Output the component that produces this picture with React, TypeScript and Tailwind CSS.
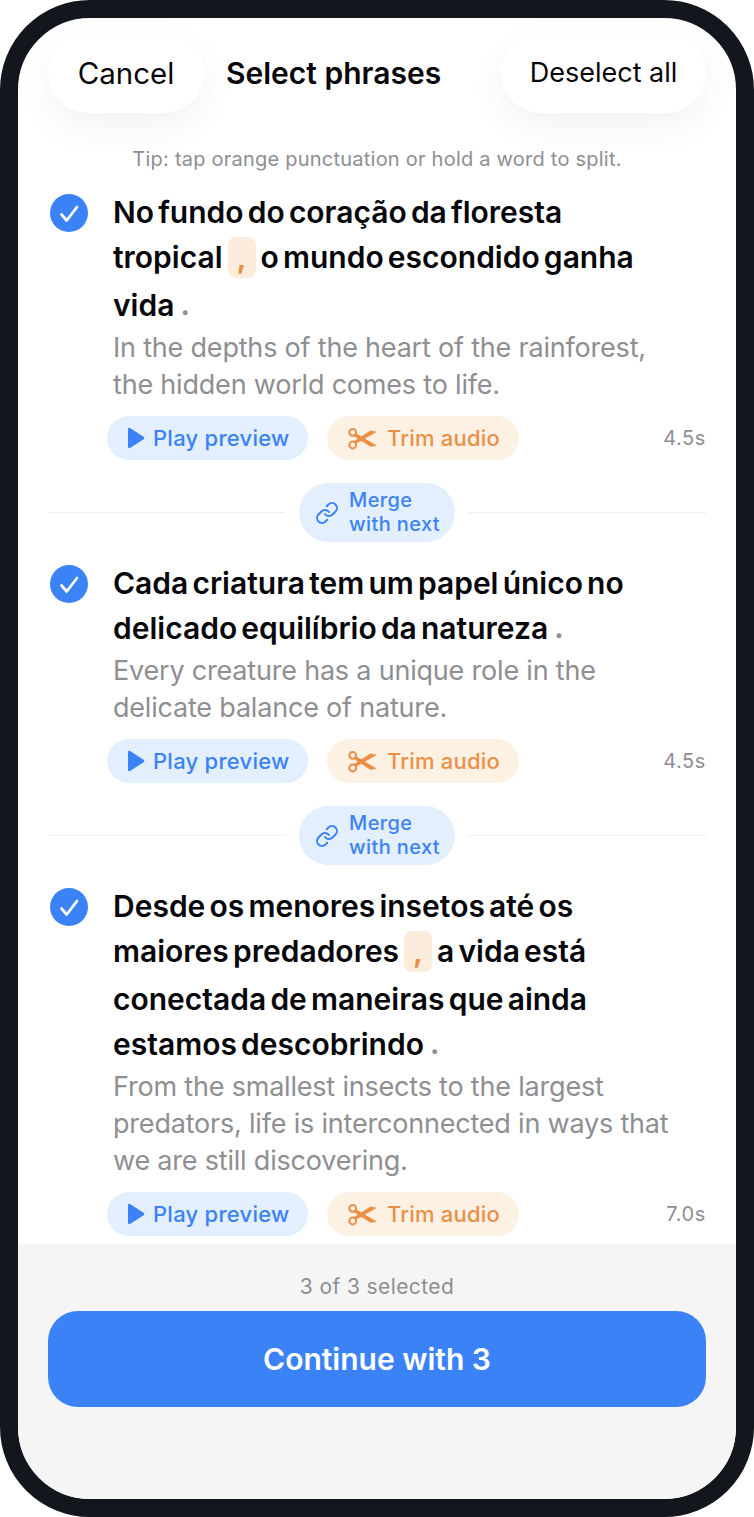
import { Link } from "lucide-react";

type Token = { t: string } | { comma: true } | { period: true };

interface Phrase {
	lines: Token[][];
	translation: string[];
	duration: string;
}

const phrases: Phrase[] = [
	{
		lines: [
			[{ t: "No fundo do coração da floresta" }],
			[{ t: "tropical" }, { comma: true }, { t: "o mundo escondido ganha" }],
			[{ t: "vida" }, { period: true }],
		],
		translation: [
			"In the depths of the heart of the rainforest,",
			"the hidden world comes to life.",
		],
		duration: "4.5s",
	},
	{
		lines: [
			[{ t: "Cada criatura tem um papel único no" }],
			[{ t: "delicado equilíbrio da natureza" }, { period: true }],
		],
		translation: [
			"Every creature has a unique role in the",
			"delicate balance of nature.",
		],
		duration: "4.5s",
	},
	{
		lines: [
			[{ t: "Desde os menores insetos até os" }],
			[{ t: "maiores predadores" }, { comma: true }, { t: "a vida está" }],
			[{ t: "conectada de maneiras que ainda" }],
			[{ t: "estamos descobrindo" }, { period: true }],
		],
		translation: [
			"From the smallest insects to the largest",
			"predators, life is interconnected in ways that",
			"we are still discovering.",
		],
		duration: "7.0s",
	},
];

function ScissorsIcon() {
	return (
		<svg width="28" height="23" viewBox="0 0 28 23" aria-hidden="true">
			<circle cx="4.7" cy="5.3" r="3.4" fill="none" stroke="#ea8f45" strokeWidth="2" />
			<circle cx="4.7" cy="18" r="3.4" fill="none" stroke="#ea8f45" strokeWidth="2" />
			<path
				d="M7.8 6.6 28 18.4l-5.4 1.2L7 9.4z"
				fill="#ea8f45"
				stroke="#ea8f45"
				strokeWidth="0.6"
				strokeLinejoin="round"
			/>
			<path
				d="M7.8 16.6 28 5l-5.4-1.2L7 13.8z"
				fill="#ea8f45"
				stroke="#ea8f45"
				strokeWidth="0.6"
				strokeLinejoin="round"
			/>
		</svg>
	);
}

function PhraseLine({ tokens }: { tokens: Token[] }) {
	const hasChip = tokens.some((tok) => "comma" in tok);
	return (
		<div className={`flex items-center whitespace-nowrap ${hasChip ? "pb-[3px]" : ""}`}>
			{tokens.map((tok, i) => {
				if ("comma" in tok) {
					return (
						<span
							key={i}
							className="mx-[5px] flex h-[41px] w-[28px] items-end justify-center rounded-lg bg-[#fbecdc] pb-[6px] font-bold text-[#ea8f45] text-[29px] leading-[28px]"
						>
							,
						</span>
					);
				}
				if ("period" in tok) {
					return (
						<span key={i} className="ml-[6px] font-bold text-[#8e8e93] text-[28px]">
							.
						</span>
					);
				}
				return <span key={i}>{tok.t}</span>;
			})}
		</div>
	);
}

function PhraseRow({ phrase }: { phrase: Phrase }) {
	return (
		<div className="flex">
			<div className="flex h-[38px] w-[38px] shrink-0 items-center justify-center rounded-full bg-[#3b82f6]">
				<svg width="38" height="38" viewBox="0 0 38 38" aria-hidden="true">
					<path
						d="M11.5 20.5l5.2 6L27 13"
						fill="none"
						stroke="#fff"
						strokeWidth="2.7"
						strokeLinecap="round"
						strokeLinejoin="round"
					/>
				</svg>
			</div>
			<div className="ml-[25px] min-w-0 flex-1 -mt-[4px]">
				<div className="font-semibold text-[#08080c] text-[30px] leading-[45px] tracking-[0px] [word-spacing:-3.4px]">
					{phrase.lines.map((line, i) => (
						<PhraseLine key={i} tokens={line} />
					))}
				</div>
				<div className="mt-[1px] text-[#8e8e93] text-[27px] leading-[37px] tracking-[-0.2px]">
					{phrase.translation.map((line) => (
						<div key={line} className="whitespace-nowrap">
							{line}
						</div>
					))}
				</div>
			</div>
		</div>
	);
}

function ActionRow({ duration }: { duration: string }) {
	return (
		<div className="mt-[13px] ml-[57px] flex items-center">
			<button
				type="button"
				className="flex h-[44px] w-[201px] items-center rounded-[22px] bg-[#e3effd] pl-[20px] font-medium text-[#3b82f6] text-[22px]"
			>
				<svg width="18" height="22" viewBox="0 0 18 22" aria-hidden="true">
					<path
						d="M1 2.2C1 1.1 2.1.5 3 1l13.6 8.7c.9.6.9 2 0 2.6L3 21c-.9.5-2-.1-2-1.2z"
						fill="#3b82f6"
					/>
				</svg>
				<span className="ml-[8px] tracking-[0.25px]">Play preview</span>
			</button>
			<button
				type="button"
				className="ml-[19px] flex h-[44px] w-[192px] items-center rounded-[22px] bg-[#fdf1e4] pl-[21px] font-medium text-[#ea8f45] text-[22px]"
			>
				<ScissorsIcon />
				<span className="ml-[11px] tracking-[0.2px]">Trim audio</span>
			</button>
			<span className="ml-auto text-[#8e8e93] text-[20px] tracking-[0.6px]">
				{duration}
			</span>
		</div>
	);
}

function MergeDivider() {
	return (
		<div className="my-[23px] -ml-[2px] flex h-[59px] items-center">
			<div className="h-px flex-1 bg-[#eeeeef]" />
			<button
				type="button"
				className="mx-[14px] flex h-[59px] w-[156px] items-center rounded-[30px] bg-[#e3effd] pl-[16px] text-left font-medium text-[#3b82f6] text-[20px] leading-[24px]"
			>
				<Link className="h-[24px] w-[24px]" strokeWidth={2} />
				<span className="ml-[10px] pb-[1px] tracking-[0.4px]">
					Merge
					<br />
					with next
				</span>
			</button>
			<div className="h-px flex-1 bg-[#eeeeef]" />
		</div>
	);
}

export default function App() {
	return (
		<div
			className="h-[1517px] w-[754px] bg-white"
			style={{ fontFamily: "Inter, 'Liberation Sans', sans-serif" }}
		>
			<div className="h-full w-full overflow-hidden rounded-[90px] border-[18px] border-[#14161d] bg-white">
				<div className="flex h-full flex-col">
					<header className="flex h-[126px] shrink-0 items-start px-[30px] pt-[15px]">
						<button
							type="button"
							className="flex h-[80px] w-[156px] items-center justify-center rounded-[40px] bg-white text-[#08080c] text-[29.5px] shadow-[0_14px_36px_rgba(0,0,0,0.05)]"
						>
							Cancel
						</button>
						<h1 className="ml-[22px] flex h-[80px] items-center font-semibold text-[#08080c] text-[30px]">
							Select phrases
						</h1>
						<button
							type="button"
							className="ml-auto flex h-[80px] w-[205px] items-center justify-center rounded-[40px] bg-white pt-[1px] text-[#08080c] text-[27px] shadow-[0_14px_36px_rgba(0,0,0,0.05)]"
						>
							Deselect all
						</button>
					</header>
					<div className="min-h-0 flex-1 overflow-hidden px-[30px]">
						<p className="pt-[1px] text-center text-[#8e8e93] text-[20px] leading-[28px] tracking-[0.23px]">
							Tip: tap orange punctuation or hold a word to split.
						</p>
						<div className="mt-[21px] ml-[2px]">
							{phrases.map((phrase, i) => (
								<div key={phrase.duration + i}>
									<PhraseRow phrase={phrase} />
									<ActionRow duration={phrase.duration} />
									{i < phrases.length - 1 && <MergeDivider />}
								</div>
							))}
						</div>
					</div>
					<footer className="h-[255px] shrink-0 bg-[#f5f5f6] px-[30px] pt-[29px]">
						<p className="text-center text-[#8e8e93] text-[21px] leading-[28px] tracking-[0.4px]">
							3 of 3 selected
						</p>
						<button
							type="button"
							className="mt-[10px] flex h-[96px] w-full items-center justify-center rounded-[30px] bg-[#3b82f6] font-semibold text-[30px] text-white"
						>
							Continue with 3
						</button>
					</footer>
				</div>
			</div>
		</div>
	);
}
